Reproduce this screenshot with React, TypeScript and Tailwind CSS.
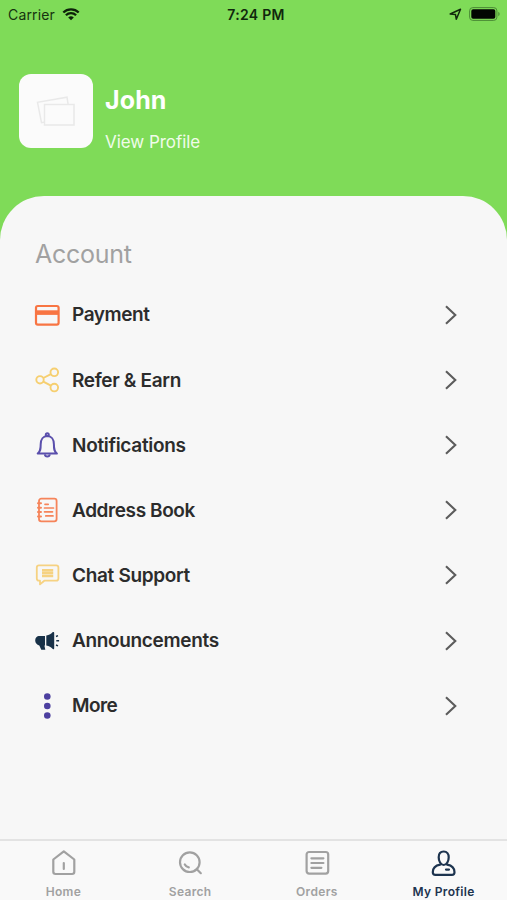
import React from 'react';

type MenuItem = {
  label: string;
  icon: React.ReactNode;
  tracking: string;
};

const menuItems: MenuItem[] = [
  { label: 'Payment', icon: <CardIcon />, tracking: 'tracking-[-0.42px]' },
  { label: 'Refer & Earn', icon: <ShareIcon />, tracking: 'tracking-[-0.34px]' },
  { label: 'Notifications', icon: <BellIcon />, tracking: 'tracking-[-0.3px]' },
  { label: 'Address Book', icon: <BookIcon />, tracking: 'tracking-[-0.4px]' },
  { label: 'Chat Support', icon: <ChatIcon />, tracking: 'tracking-[-0.33px]' },
  { label: 'Announcements', icon: <MegaphoneIcon />, tracking: 'tracking-[-0.34px]' },
  { label: 'More', icon: <DotsIcon />, tracking: 'tracking-[-0.6px]' },
];

function CardIcon() {
  return (
    <svg width="26" height="26" viewBox="0 0 26 26" fill="none" stroke="#f87543">
      <rect x="2" y="4" width="22.6" height="18.6" rx="1.8" strokeWidth="2.2" />
      <path d="M2 10.6h22.6" strokeWidth="4.6" />
    </svg>
  );
}

function ShareIcon() {
  return (
    <svg width="26" height="26" viewBox="0 0 26 26" fill="none" stroke="#f6cf70" strokeWidth="1.9">
      <circle cx="6" cy="12.8" r="3.7" />
      <circle cx="20.3" cy="5.3" r="3.8" />
      <circle cx="20.3" cy="20.6" r="3.8" />
      <path d="M9.3 11l7.6-3.9M9.3 14.6l7.6 4.1" />
    </svg>
  );
}

function BellIcon() {
  return (
    <svg width="26" height="26" viewBox="0 0 26 26" fill="none" stroke="#5a4fac" strokeWidth="2" strokeLinejoin="round">
      <path d="M3.7 21.6c2.7-2.2 3-4.2 3-9.3 0-5 2.5-8.3 6.6-8.3s6.6 3.3 6.6 8.3c0 5.1.3 7.1 3 9.300z" />
      <circle cx="13.3" cy="2.8" r="1.5" />
      <path d="M10.8 22.4c.4 2.8 4.600 2.800 5 0" />
    </svg>
  );
}

function BookIcon() {
  return (
    <svg width="26" height="26" viewBox="0 0 26 26" fill="none" stroke="#f6845a" strokeLinecap="round">
      <rect x="5" y="1.6" width="17.6" height="22.8" rx="2.3" strokeWidth="1.8" />
      <path d="M4 6.3h3M4 10.7h3M4 15.1h3M4 19.5h3" strokeWidth="2" />
      <path d="M11 7.3h3.2M10.500 11h9M10.500 14.800h8M11.800 18.900h7.200" strokeWidth="1.7" />
    </svg>
  );
}

function ChatIcon() {
  return (
    <svg width="26" height="26" viewBox="0 0 26 26" fill="none" stroke="#f6d282" strokeWidth="1.8" strokeLinejoin="round">
      <path d="M5 3.3h17.2q2.2 0 2.2 2.2v11q0 2.2-2.2 2.2H10.3L6 22.400v-3.700H5q-2.200 0-2.200-2.200v-11Q2.800 3.300 5 3.300z" />
      <path d="M8 8.200h11.200M8 11.100h11.200M8 14h11.200" strokeWidth="2.500" />
    </svg>
  );
}

function MegaphoneIcon() {
  return (
    <svg width="26" height="26" viewBox="0 0 26 26" fill="#183148">
      <path d="M4.500 8.100h6.500v9.300h-.6l.9 4.300H7.300l-2-4.300C2.800 16.700 1.200 14.800 1.200 12.500s1.400-4 3.300-4.400z" />
      <path d="M12.300 7.500c3-.5 5-1.700 6.500-3.400q1.400-.5 1.400.8v15.400q0 1.300-1.400.7c-1.800-1.800-3.500-3.200-6.500-3.600z" />
      <path d="M22 8.500l2-.8M22.300 12.700h2.800M22 17l2 .8" stroke="#183148" strokeWidth="1.400" />
    </svg>
  );
}

function DotsIcon() {
  return (
    <svg width="26" height="26" viewBox="0 0 26 26" fill="#4d40a0">
      <circle cx="13.3" cy="3.5" r="3.3" />
      <circle cx="13.3" cy="13" r="3.3" />
      <circle cx="13.3" cy="22.5" r="3.3" />
    </svg>
  );
}

function Chevron() {
  return (
    <svg width="14" height="22" viewBox="0 0 14 22" fill="none" stroke="#5c5c5c" strokeWidth="2.1" className="shrink-0">
      <path d="M2 2.2l9.3 8.800L2 19.800" />
    </svg>
  );
}

function StatusBar() {
  return (
    <div className="grid h-[28px] grid-cols-3 items-center px-2 text-[14px] text-[#16330f]">
      <div className="flex items-center gap-[7px]">
        <span className="tracking-[0.15px]">Carrier</span>
        <svg width="18" height="13" viewBox="0 0 17 13" fill="none" stroke="#0d210a" strokeWidth="2.3">
          <path d="M.8 4.500a11 11 0 0115.400 0M3.400 7.300a7.200 7.200 0 0110.200 0" />
          <path d="M8.500 12.300L5.700 9.500a4 4 0 015.600 0z" fill="#0d210a" stroke="none" />
        </svg>
      </div>
      <span className="pl-[5px] text-center font-semibold tracking-[0.3px] text-[#10270c]">7:24 PM</span>
      <div className="-mr-[2px] flex items-center justify-end gap-[7px]">
        <svg width="13" height="13" viewBox="0 0 13 13" fill="none" stroke="#10270c" strokeWidth="1.5" strokeLinejoin="round">
          <path d="M11.500 1.300L7.300 11.300 6.500 6.600 1.200 6z" />
        </svg>
        <svg width="32" height="14" viewBox="0 0 32 14">
          <rect x=".6" y=".6" width="27.3" height="12.8" rx="3.2" fill="none" stroke="#4a8a35" strokeWidth="1" />
          <rect x="2.300" y="2.300" width="24" height="9.400" rx="1.800" fill="#020602" />
          <path d="M29.300 4.800c1.800.8 1.800 3.600 0 4.400z" fill="#4a8a35" />
        </svg>
      </div>
    </div>
  );
}

function Tab({ label, active, children }: { label: string; active?: boolean; children: React.ReactNode }) {
  return (
    <div className={`flex flex-1 flex-col items-center ${active ? 'text-[#1d344f]' : 'text-[#a1a1a1]'}`}>
      <svg width="28" height="28" viewBox="0 0 28 28" fill="none" stroke="currentColor" strokeWidth="2.2" strokeLinecap="round" strokeLinejoin="round">
        {children}
      </svg>
      <span className="mt-[7px] text-[12px] leading-[16px] font-semibold tracking-[0.32px]">{label}</span>
    </div>
  );
}

export default function App() {
  return (
    <div className="flex h-[900px] w-[507px] flex-col overflow-hidden bg-[#f7f7f7] font-['Inter','Liberation_Sans',sans-serif]">
      {/* Header */}
      <div className="h-[240px] shrink-0 bg-[#7fdb58]">
        <StatusBar />
        <div className="flex gap-[12px] pt-[46px] pl-[19px]">
          <div className="flex size-[74px] items-center justify-center rounded-[12px] bg-[#fbfbfb]">
            <svg width="40" height="32" viewBox="0 0 40 32" fill="#fbfbfb" stroke="#e9e9e9" strokeWidth="1.5">
              <path d="M5.500 27.700L1.500 7.300 31 2.200 34 22z" />
              <rect x="8.500" y="9.500" width="29.500" height="20.500" />
            </svg>
          </div>
          <div className="flex flex-col">
            <span className="mt-[9px] text-[25px] leading-[34px] font-bold tracking-[0.1px] text-white">John</span>
            <span className="mt-[14px] text-[17px] leading-[22px] tracking-[-0.05px] text-[#f0fbea]">View Profile</span>
          </div>
        </div>
      </div>

      {/* Account panel */}
      <div className="-mt-[44px] flex-1 rounded-t-[44px] bg-[#f7f7f7] px-[34px]">
        <h2 className="pt-[42px] pl-px text-[25px] leading-[32px] tracking-[-0.25px] text-[#a1a1a1]">Account</h2>
        <div className="mt-[12px]">
          {menuItems.map((item) => (
            <div key={item.label} className="flex h-[65.2px] items-center pr-[15px]">
              {item.icon}
              <span className={`ml-[12px] flex-1 pt-[2px] text-[19px] font-semibold text-[#2c2c2c] ${item.tracking}`}>{item.label}</span>
              <Chevron />
            </div>
          ))}
        </div>
      </div>

      {/* Tab bar */}
      <div className="flex h-[61px] shrink-0 border-t-2 border-[#e3e3e3] bg-[#f9f9f9] pt-[8px]">
        <Tab label="Home">
          <path d="M4.300 10.500L14.800 2.300l10.500 8.200v12.300q0 2.200-2.200 2.200h-16.600q-2.200 0-2.200-2.200zM14.800 14v6" />
        </Tab>
        <Tab label="Search">
          <circle cx="13.800" cy="13.200" r="9.800" />
          <path d="M20.800 20.200l4 4M8.800 15.500q1.300 2.400 4 2.900" />
        </Tab>
        <Tab label="Orders">
          <rect x="3.600" y="3" width="21.600" height="21.600" rx="2.500" />
          <path d="M8.400 9.300h12M8.400 14h12M8.400 18.800h10" />
        </Tab>
        <Tab label="My Profile" active>
          <path d="M10.200 15.600C4.500 16.600 2.800 19.700 2.800 23.200q0 2.600 2.600 2.600h16.500q2.600 0 2.600-2.600c0-3.500-1.700-6.600-7.400-7.600M13.700 2.500c-3.300 0-5 2.400-5 5.700 0 3.900 1.900 7.800 5 7.800s5-3.900 5-7.800c0-3.300-1.700-5.700-5-5.700zM16 20.600h3" />
        </Tab>
      </div>
    </div>
  );
}
